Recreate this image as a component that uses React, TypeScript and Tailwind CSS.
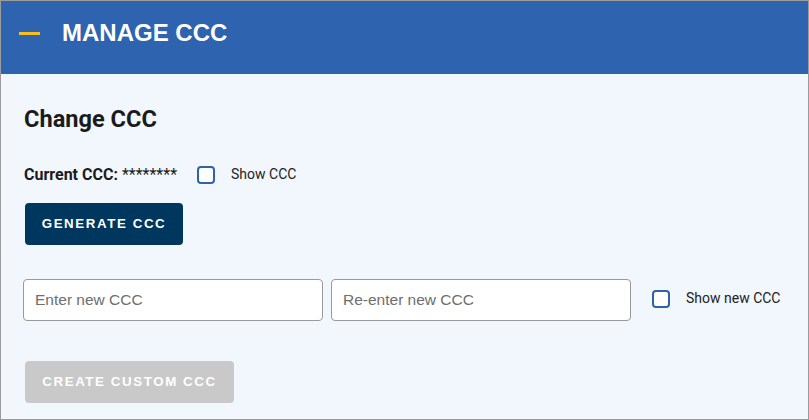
import { useState } from 'react';

function Check({ checked, onChange, label }: { checked: boolean; onChange: () => void; label: string }) {
  return (
    <label className="flex cursor-pointer items-center">
      <span
        onClick={onChange}
        className="box-border block h-[18px] w-[18px] rounded-[4px] border-2 border-[#2f62ad] bg-white"
      />
      <span className="ml-[16px] -mt-[3px] text-[14px] leading-[18px] text-[#222]" style={{ fontFamily: 'Roboto, sans-serif' }}>
        {label}
      </span>
    </label>
  );
}

export default function App() {
  const [showCurrent, setShowCurrent] = useState(false);
  const [showNew, setShowNew] = useState(false);

  return (
    <div className="box-border flex h-[420px] w-[809px] flex-col border border-[#9b9b9b] bg-[#f2f7fe]">
      <header className="flex h-[73px] shrink-0 items-center bg-[#2e63b0] pb-[9px] pl-[18px]">
        <span className="block h-[3px] w-[21px] bg-[#f6be1e]" />
        <h1
          className="ml-[22px] text-[24px] font-bold leading-none text-white"
          style={{ fontFamily: '"Liberation Sans", Arial, sans-serif' }}
        >
          MANAGE CCC
        </h1>
      </header>

      <main className="flex flex-col px-[23px] pt-[31px]" style={{ fontFamily: 'Roboto, sans-serif' }}>
        <h2 className="text-[23.6px] font-bold leading-[28px] text-[#1b1b1b]">Change CCC</h2>

        <div className="mt-[32px] flex h-[20px] items-center">
          <span className="text-[16px] font-bold leading-[20px] text-[#1b1b1b]">
            Current CCC: <span className="font-normal">{showCurrent ? 'A7F3K9Q2' : '********'}</span>
          </span>
          <div className="ml-[20px]">
            <Check checked={showCurrent} onChange={() => setShowCurrent(!showCurrent)} label="Show CCC" />
          </div>
        </div>

        <button
          type="button"
          className="mt-[18px] ml-[1px] h-[42px] w-[158px] rounded-[4px] bg-[#00375f] text-[13.3px] font-bold tracking-[1.6px] text-white"
          style={{ fontFamily: '"Liberation Sans", Arial, sans-serif' }}
        >
          GENERATE CCC
        </button>

        <div className="mt-[34px] -ml-[1px] flex items-start">
          <input
            type={showNew ? 'text' : 'password'}
            placeholder="Enter new CCC"
            className="box-border h-[42px] w-[300px] rounded-[4px] border border-[#9a9a9a] bg-white px-[11px] text-[15.5px] text-[#333] outline-none placeholder:text-[#6e6e6e]"
            style={{ fontFamily: '"Liberation Sans", Arial, sans-serif' }}
          />
          <input
            type={showNew ? 'text' : 'password'}
            placeholder="Re-enter new CCC"
            className="ml-[8px] box-border h-[42px] w-[300px] rounded-[4px] border border-[#9a9a9a] bg-white px-[11px] text-[15.5px] text-[#333] outline-none placeholder:text-[#6e6e6e]"
            style={{ fontFamily: '"Liberation Sans", Arial, sans-serif' }}
          />
          <div className="ml-[21px] mt-[11px]">
            <Check checked={showNew} onChange={() => setShowNew(!showNew)} label="Show new CCC" />
          </div>
        </div>

        <button
          type="button"
          disabled
          className="mt-[40px] ml-[1px] h-[42px] w-[209px] rounded-[4px] bg-[#c9c9c9] text-[13.3px] font-bold tracking-[1.6px] text-white"
          style={{ fontFamily: '"Liberation Sans", Arial, sans-serif' }}
        >
          CREATE CUSTOM CCC
        </button>
      </main>
    </div>
  );
}
